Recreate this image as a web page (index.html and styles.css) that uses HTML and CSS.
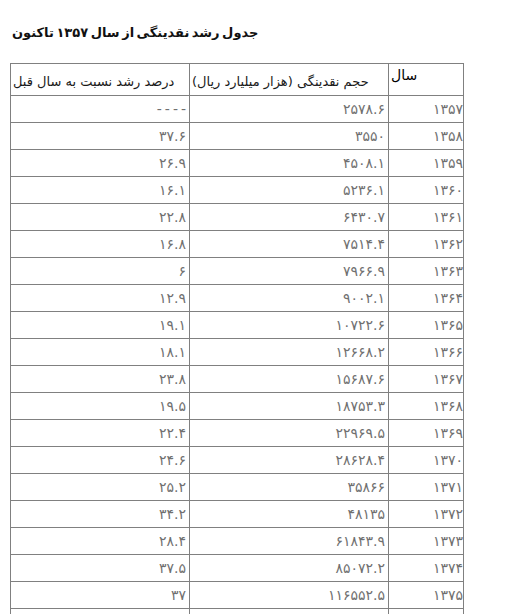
FILE: index.html
```html
<!DOCTYPE html>
<html lang="fa">
<head>
<meta charset="utf-8">
<title>جدول رشد نقدینگی</title>
<link rel="stylesheet" href="styles.css">
</head>
<body>
<div class="page">
  <h1 class="title" dir="rtl">جدول رشد نقدینگی از سال ۱۳۵۷ تاکنون</h1>
  <table class="grid" dir="rtl">
    <colgroup>
      <col class="c-year">
      <col class="c-vol">
      <col class="c-pct">
    </colgroup>
    <thead>
      <tr>
        <th class="h-year">سال</th>
        <th>حجم نقدینگی (هزار میلیارد ریال)</th>
        <th>درصد رشد نسبت به سال قبل</th>
      </tr>
    </thead>
    <tbody>
      <tr><td class="yr">۱۳۵۷</td><td>۲۵۷۸.۶</td><td class="dash">----</td></tr>
      <tr><td class="yr">۱۳۵۸</td><td>۳۵۵۰</td><td>۳۷.۶</td></tr>
      <tr><td class="yr">۱۳۵۹</td><td>۴۵۰۸.۱</td><td>۲۶.۹</td></tr>
      <tr><td class="yr">۱۳۶۰</td><td>۵۲۳۶.۱</td><td>۱۶.۱</td></tr>
      <tr><td class="yr">۱۳۶۱</td><td>۶۴۳۰.۷</td><td>۲۲.۸</td></tr>
      <tr><td class="yr">۱۳۶۲</td><td>۷۵۱۴.۴</td><td>۱۶.۸</td></tr>
      <tr><td class="yr">۱۳۶۳</td><td>۷۹۶۶.۹</td><td>۶</td></tr>
      <tr><td class="yr">۱۳۶۴</td><td>۹۰۰۲.۱</td><td>۱۲.۹</td></tr>
      <tr><td class="yr">۱۳۶۵</td><td>۱۰۷۲۲.۶</td><td>۱۹.۱</td></tr>
      <tr><td class="yr">۱۳۶۶</td><td>۱۲۶۶۸.۲</td><td>۱۸.۱</td></tr>
      <tr><td class="yr">۱۳۶۷</td><td>۱۵۶۸۷.۶</td><td>۲۳.۸</td></tr>
      <tr><td class="yr">۱۳۶۸</td><td>۱۸۷۵۳.۳</td><td>۱۹.۵</td></tr>
      <tr><td class="yr">۱۳۶۹</td><td>۲۲۹۶۹.۵</td><td>۲۲.۴</td></tr>
      <tr><td class="yr">۱۳۷۰</td><td>۲۸۶۲۸.۴</td><td>۲۴.۶</td></tr>
      <tr><td class="yr">۱۳۷۱</td><td>۳۵۸۶۶</td><td>۲۵.۲</td></tr>
      <tr><td class="yr">۱۳۷۲</td><td>۴۸۱۳۵</td><td>۳۴.۲</td></tr>
      <tr><td class="yr">۱۳۷۳</td><td>۶۱۸۴۳.۹</td><td>۲۸.۴</td></tr>
      <tr><td class="yr">۱۳۷۴</td><td>۸۵۰۷۲.۲</td><td>۳۷.۵</td></tr>
      <tr><td class="yr">۱۳۷۵</td><td>۱۱۶۵۵۲.۵</td><td>۳۷</td></tr>
      <tr><td class="yr">&nbsp;</td><td>&nbsp;</td><td>&nbsp;</td></tr>
    </tbody>
  </table>
</div>
</body>
</html>
```

FILE: styles.css
```css
html, body {
  margin: 0;
  padding: 0;
  background: #ffffff;
}

body {
  font-family: "DejaVu Sans", "Noto Sans", sans-serif;
  color: #000;
}

.page {
  padding: 22px 0 0 10px;
}

.title {
  display: inline-block;
  margin: 0 0 19px 2px;
  font-size: 13px;
  font-weight: bold;
  line-height: 22px;
  word-spacing: -2px;
  color: #111;
}

.grid {
  border-collapse: collapse;
  table-layout: fixed;
  width: 453px;
  border: 1px solid #3a3a3a;
}

.c-year { width: 75px; }
.c-vol { width: 199px; }
.c-pct { width: 179px; }

.grid th,
.grid td {
  border: 1px solid #808080;
  white-space: nowrap;
  overflow: hidden;
}

.grid th {
  height: 32px;
  padding: 4px 2px 0 2px;
  box-sizing: border-box;
  font-size: 13px;
  font-weight: normal;
  color: #1a1a1a;
  text-align: left;
  vertical-align: middle;
}

.grid th.h-year {
  vertical-align: top;
  padding-top: 3px;
  font-size: 14px;
  color: #000;
}

.grid td {
  height: 26px;
  padding: 0 3px 0 2px;
  font-size: 14px;
  letter-spacing: 0.4px;
  color: #707070;
  text-align: right;
  vertical-align: middle;
}

.grid td.yr {
  padding-right: 0;
}

.grid td.dash {
  letter-spacing: 3px;
  padding-right: 0;
}
```
